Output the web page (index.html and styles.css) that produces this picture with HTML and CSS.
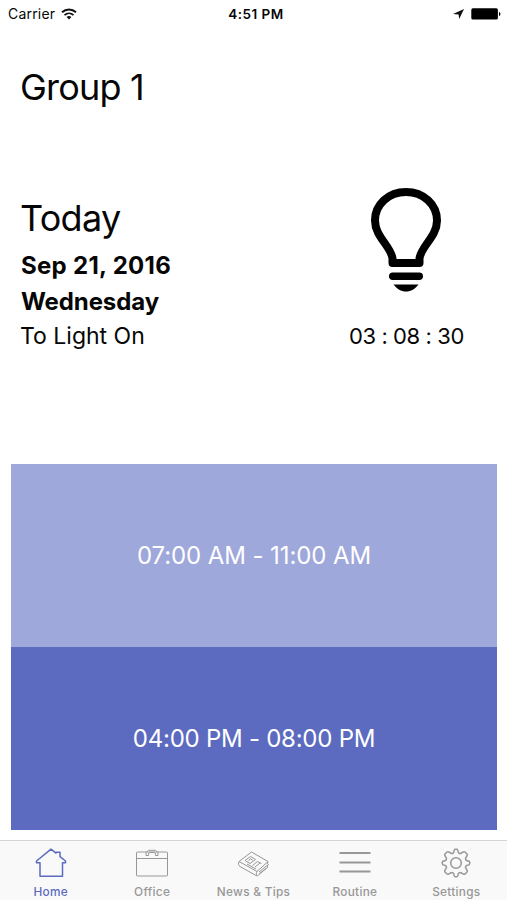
FILE: index.html
```html
<!DOCTYPE html>
<html lang="en">
<head>
  <meta charset="UTF-8" />
  <meta name="viewport" content="width=device-width, initial-scale=1.0"/>
  <title>Group 1</title>
  <link rel="stylesheet" href="styles.css">
</head>
<body>

  <div class="status-bar">
    <div class="status-left">
      <span class="carrier">Carrier</span>
      <svg class="wifi" width="16" height="12" viewBox="0 0 16 12" fill="none" stroke="#111" stroke-width="1.9">
        <path d="M1 4.3C5 .6 11 .6 15 4.3"/>
        <path d="M3.5 7.1c2.6-2.3 6.4-2.3 9 0"/>
        <path d="M5.6 9c1.4-1.2 3.4-1.2 4.8 0L8 11.6z" fill="#111" stroke="none"/>
      </svg>
    </div>
    <span class="clock">4:51 PM</span>
    <div class="status-right">
      <svg width="11" height="10" viewBox="0 0 11 10"><path d="M11 0L6.2 10 5.6 5.400 0 5z" fill="#111"/></svg>
      <svg width="30" height="12" viewBox="0 0 30 12">
        <rect x=".3" y=".3" width="26.6" height="11.2" rx="1.6"/>
        <path d="M28 4c1.9.5 1.9 3.5 0 4z"/>
      </svg>
    </div>
  </div>

  <h1 class="group-title">Group 1</h1>

  <div class="today">
    <div class="today-info">
      <h2>Today</h2>
      <p class="date">Sep 21, 2016</p>
      <p class="weekday">Wednesday</p>
      <p class="next-event">To Light On</p>
    </div>
    <div class="today-timer">
      <svg width="70" height="104" viewBox="0 0 70 104">
        <path d="M21.500 75V70.500C20 58 4 49 4 32.500C4 16.500 17.500 4 35 4S66 16.500 66 32.500C66 49 50 58 48.500 70.500V75z" fill="none" stroke="#000" stroke-width="8" stroke-linejoin="round"/>
        <rect x="18" y="84.500" width="34" height="7.500" rx="3.700"/>
        <path d="M22.500 96.500h25C44 101 40 103.500 35 103.500S26 101 22.500 96.500z"/>
      </svg>
      <div class="countdown">03 : 08 : 30</div>
    </div>
  </div>

  <div class="schedule">
    <div class="slot slot-morning">07:00 AM - 11:00 AM</div>
    <div class="slot slot-evening">04:00 PM - 08:00 PM</div>
  </div>

  <nav class="tab-bar">
    <a class="tab active">
      <svg width="34" height="30" viewBox="0 0 34 30">
        <path d="M6 14.800H2.500V13L17 1.200l5 3.900V4.300h4V8.600l5.500 4.400v1.800H28.500V28.300H6z"/>
      </svg>
      <span>Home</span>
    </a>
    <a class="tab">
      <svg width="34" height="30" viewBox="0 0 34 30">
        <rect x="1.500" y="4" width="31" height="24" rx="1"/>
        <path d="M1.500 10.500h31M11 4.500v3h2.500V5.500l1.500-1h4l1.500 1v2H23v-3l-2.500-2.200h-7z"/>
      </svg>
      <span>Office</span>
    </a>
    <a class="tab">
      <svg width="34" height="30" viewBox="0 0 34 30">
        <path d="M2 13.500L14.500 4 31 13.500 20 23.500zM2 13.500c-1 2-.5 4 1 5L19 27.500c2 .8 2.500-.2 3-1l9-7.500-1-1 1.500-1.200-1-1 .5-2.300M20 23.500c-1 1.500-.5 3-.2 4M22 24l8-6.500M22.500 25.500l6.500-5"/>
        <path d="M8 12.500l5.500-4 5 3-5.500 4zM11.500 12.500l2-1.700 2 1.300M15.500 17.500l5-4 4 2M18 19l5-4M10 16l9 5"/>
      </svg>
      <span>News &amp; Tips</span>
    </a>
    <a class="tab">
      <svg width="34" height="30" viewBox="0 0 34 30">
        <path class="menu-lines" d="M1.500 5h31M1.500 14.500h31M1.500 23.500h31"/>
      </svg>
      <span>Routine</span>
    </a>
    <a class="tab">
      <svg width="34" height="30" viewBox="-17 -15 34 30">
        <path class="gear" d="M-3-9.900Q-2-10.500-1.900-12.500Q-1.700-13.700-.8-13.700H.8Q1.700-13.700 1.900-12.500Q2-10.500 3-9.900Q4.200-8.900 5.700-10.100Q8-11.900 9-11L11-9Q11.900-8 10.100-5.700Q8.900-4.200 9.900-3Q10.500-2 12.500-1.900Q13.700-1.700 13.700-.8V.8Q13.700 1.700 12.500 1.900Q10.500 2 9.900 3Q8.900 4.200 10.100 5.700Q11.900 8 11 9L9 11Q8 11.900 5.700 10.100Q4.200 8.900 3 9.900Q2 10.500 1.900 12.500Q1.700 13.700 .8 13.700H-.8Q-1.700 13.700-1.900 12.500Q-2 10.500-3 9.900Q-4.200 8.900-5.700 10.100Q-8 11.900-9 11L-11 9Q-11.900 8-10.100 5.700Q-8.900 4.200-9.900 3Q-10.500 2-12.500 1.900Q-13.700 1.700-13.700 .8V-.8Q-13.700-1.700-12.500-1.900Q-10.500-2-9.900-3Q-8.900-4.200-10.100-5.700Q-11.900-8-11-9L-9-11Q-8-11.900-5.700-10.100Q-4.200-8.900-3-9.900z"/>
        <circle class="gear" r="5.300"/>
      </svg>
      <span>Settings</span>
    </a>
  </nav>

</body>
</html>
```

FILE: styles.css
```css
:root {
  --text: #060606;
  --slot-light: #9fa8da;
  --slot-dark: #5c6bc0;
  --tab-bg: #f9f9f9;
  --tab-gray: #979797;
}

* {
  box-sizing: border-box;
}

body {
  margin: 0;
  height: 900px;
  display: flex;
  flex-direction: column;
  font-family: Inter, 'Liberation Sans', sans-serif;
  background-color: #fff;
  color: var(--text);
  overflow: hidden;
}

h1, h2, p {
  margin: 0;
}

/* Status bar */
.status-bar {
  display: grid;
  grid-template-columns: 1fr auto 1fr;
  align-items: center;
  height: 27px;
  padding: 0 6px 0 8px;
  font-size: 14px;
}

.status-left,
.status-right {
  display: flex;
  align-items: center;
  gap: 6px;
}

.carrier {
  letter-spacing: 0.2px;
}

.status-right {
  justify-content: flex-end;
  gap: 7px;
}

.clock {
  font-weight: 600;
  font-size: 13.500px;
  letter-spacing: 0.5px;
  margin-left: 3px;
}

.group-title {
  margin: 38px 0 0 20px;
  font-size: 36px;
  line-height: 44px;
  font-weight: 400;
  letter-spacing: -0.800px;
}

/* Today */
.today {
  display: flex;
  justify-content: space-between;
  margin-top: 79px;
  padding: 0 43px 0 21px;
}

.today-info {
  padding-top: 8px;
}

.today-info h2 {
  margin: 0 0 8px -1px;
  font-size: 36px;
  line-height: 44px;
  font-weight: 400;
  letter-spacing: -0.700px;
}

.today-info p {
  font-size: 23px;
  line-height: 35.500px;
}

.today-info .date,
.today-info .weekday {
  font-size: 24px;
  font-weight: 700;
}

.today-info .date {
  letter-spacing: 0.300px;
}

.today-info .weekday {
  letter-spacing: -0.100px;
}

.today-info .next-event {
  margin-left: -1px;
}

.today-timer {
  display: flex;
  flex-direction: column;
  align-items: center;
}

.countdown {
  margin-top: 30px;
  font-size: 22px;
  line-height: 28px;
  letter-spacing: -0.400px;
  white-space: nowrap;
}

/* Schedule */
.schedule {
  margin: auto 10px 10.500px 11px;
}

.slot {
  display: flex;
  align-items: center;
  justify-content: center;
  height: 183px;
  padding-top: 1px;
  color: #fff;
  font-size: 24px;
}

.slot-morning {
  background: var(--slot-light);
  letter-spacing: -0.100px;
}

.slot-evening {
  background: var(--slot-dark);
  letter-spacing: -0.250px;
}

/* Tab bar */
.tab-bar {
  display: flex;
  height: 60px;
  padding-top: 7px;
  background: var(--tab-bg);
  border-top: 1px solid #d4d4d4;
}

.tab {
  flex: 1;
  display: flex;
  flex-direction: column;
  align-items: center;
  color: var(--tab-gray);
  font-size: 11.800px;
  line-height: 14px;
  font-weight: 500;
  letter-spacing: 0.3px;
}

.tab svg {
  fill: none;
  stroke: currentColor;
  stroke-width: 1;
  stroke-linejoin: round;
  margin-bottom: 7px;
}

.tab .menu-lines {
  stroke-width: 2;
}

.tab .gear {
  stroke-width: 1.500;
}

.tab.active {
  color: var(--slot-dark);
}

.tab.active svg {
  stroke-width: 1.500;
}
```
